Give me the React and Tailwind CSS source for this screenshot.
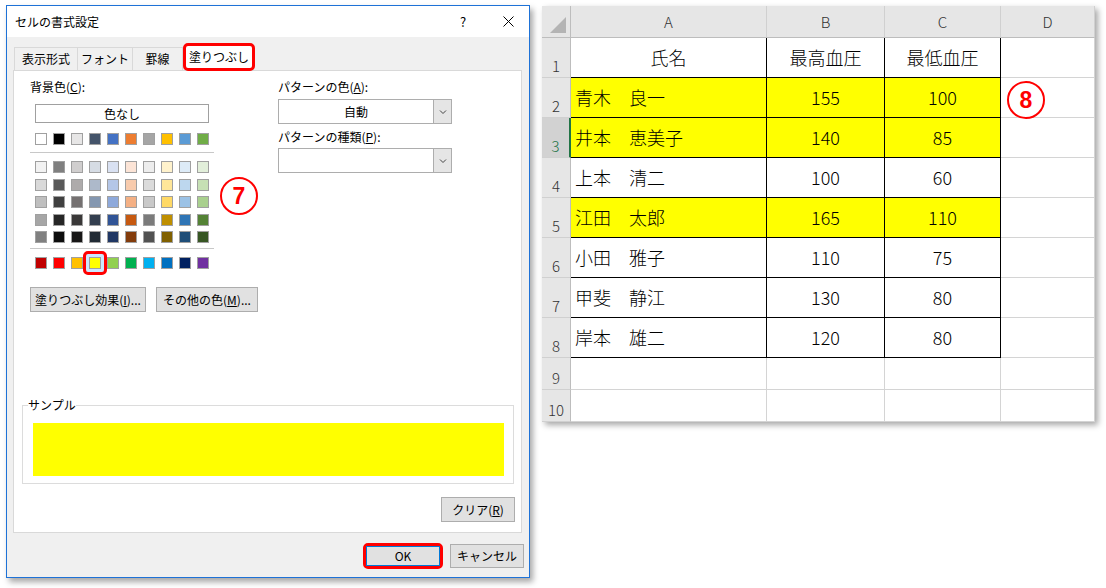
import React from "react";

const font = "font-['Noto_Sans_CJK_JP','Noto_Sans',sans-serif]";

const topRow = ["#ffffff", "#000000", "#e7e6e6", "#44546a", "#4472c4", "#ed7d31", "#a5a5a5", "#ffc000", "#5b9bd5", "#70ad47"];
const tintRows = [
  ["#f2f2f2", "#7f7f7f", "#d0cece", "#d6dce4", "#d9e1f2", "#fce4d6", "#ededed", "#fff2cc", "#ddebf7", "#e2efda"],
  ["#d9d9d9", "#595959", "#aeabab", "#adb9ca", "#b4c6e7", "#f8cbad", "#dbdbdb", "#ffe699", "#bdd7ee", "#c6e0b4"],
  ["#bfbfbf", "#404040", "#757171", "#8497b0", "#8ea9db", "#f4b084", "#c9c9c9", "#ffd966", "#9bc2e6", "#a9d08e"],
  ["#a6a6a6", "#262626", "#3a3838", "#333f4f", "#305496", "#c65911", "#7b7b7b", "#bf8f00", "#2f75b5", "#548235"],
  ["#808080", "#0d0d0d", "#171616", "#222b35", "#203764", "#833c0c", "#525252", "#806000", "#1f4e78", "#375623"],
];
const standard = ["#c00000", "#ff0000", "#ffc000", "#ffff00", "#92d050", "#00b050", "#00b0f0", "#0070c0", "#002060", "#7030a0"];

const rows = [
  ["氏名", "最高血圧", "最低血圧", false],
  ["青木　良一", "155", "100", true],
  ["井本　恵美子", "140", "85", true],
  ["上本　清二", "100", "60", false],
  ["江田　太郎", "165", "110", true],
  ["小田　雅子", "110", "75", false],
  ["甲斐　静江", "130", "80", false],
  ["岸本　雄二", "120", "80", false],
];

function Swatch({ color }) {
  return (
    <div
      className="w-[12px] h-[12px] border border-[#a0a0a0]"
      style={{ backgroundColor: color }}
    />
  );
}

function SwatchRow({ colors, selected }) {
  return (
    <div className="flex gap-[6px]">
      {colors.map((c, i) =>
        i === selected ? (
          <div key={i} className="relative w-[12px] h-[12px]">
            <span className="absolute -inset-[6px] rounded-[5px] border-[3px] border-[#ff0000] bg-[#cce8ff]" />
            <span className="absolute inset-0 border border-[#a0a0a0] bg-[#ffff00]" />
          </div>
        ) : (
          <Swatch key={i} color={c} />
        )
      )}
    </div>
  );
}

function Chevron() {
  return (
    <svg width="10" height="10" viewBox="0 0 10 10">
      <polyline points="2,3.5 5,6.5 8,3.5" fill="none" stroke="#444" strokeWidth="1" />
    </svg>
  );
}

function Dropdown({ value }) {
  return (
    <div className="flex w-[174px] h-[25px] border border-[#adadad] bg-white">
      <div className="flex-1 flex items-center justify-center text-[12px]">{value}</div>
      <div className="w-[18px] border-l border-[#adadad] bg-[#e5e5e5] flex items-center justify-center">
        <Chevron />
      </div>
    </div>
  );
}

function Btn({ className = "", children }) {
  return (
    <div className={`h-[25px] border border-[#adadad] bg-[#e1e1e1] flex items-center justify-center text-[12px] ${className}`}>
      {children}
    </div>
  );
}

function Circle({ n, className }) {
  return (
    <div
      className={`absolute w-[38px] h-[38px] rounded-full border-[2.5px] border-[#ff0000] bg-white flex items-center justify-center text-[23px] font-bold text-[#ff0000] font-['Liberation_Sans',sans-serif] ${className}`}
    >
      {n}
    </div>
  );
}

function Dialog() {
  return (
    <div className="ml-[6px] mt-[5px] w-[524px] h-[573px] border border-[#1e72d7] bg-[#f0f0f0] flex flex-col shadow-[3px_4px_6px_rgba(0,0,0,0.35)]">
      <div className="h-[31px] bg-white flex items-center pl-[8px] text-[12px]">
        <span>セルの書式設定</span>
        <div className="ml-auto mr-[6px] flex items-center">
          <div className="w-[30px] text-center text-[13px]">?</div>
          <div className="ml-[15px] w-[30px] flex justify-center">
            <svg width="11" height="11" viewBox="0 0 11 11">
              <path d="M0.5 0.5 L10.5 10.5 M10.5 0.5 L0.5 10.5" stroke="#000" strokeWidth="1" />
            </svg>
          </div>
        </div>
      </div>

      <div className="relative z-10 h-[34px] pt-[6px] pl-[7px] flex items-end text-[12px]">
        <div className="w-[64px] h-[23px] mb-px border border-b-0 border-[#d9d9d9] bg-[#f0f0f0] flex items-center justify-center">表示形式</div>
        <div className="w-[55px] h-[23px] mb-px border border-l-0 border-b-0 border-[#d9d9d9] bg-[#f0f0f0] flex items-center justify-center">フォント</div>
        <div className="w-[50px] h-[23px] mb-px border border-l-0 border-b-0 border-[#d9d9d9] bg-[#f0f0f0] flex items-center justify-center">罫線</div>
        <div className="w-[72px] h-[28px] rounded-[5px] border-[3px] border-[#ff0000] bg-white flex items-center justify-center">塗りつぶし</div>
      </div>

      <div className="relative -mt-px ml-[6px] mr-[7px] h-[463px] border border-[#d9d9d9] bg-white flex flex-col text-[12px]">
        <div className="flex pl-[16px] pt-[8px]">
          <div className="w-[248px] flex flex-col">
            <div className="h-[16px] leading-[16px]">
              背景色(<span className="underline">C</span>):
            </div>
            <div className="ml-[5px] mt-[9px] w-[174px] h-[19px] border border-[#a0a0a0] flex items-center justify-center">色なし</div>
            <div className="ml-[5px] mt-[10px]">
              <SwatchRow colors={topRow} />
            </div>
            <div className="mt-[7px] w-[184px] h-px bg-[#c8c8c8]" />
            <div className="ml-[5px] mt-[8px] flex flex-col gap-[5.5px]">
              {tintRows.map((r, i) => (
                <SwatchRow key={i} colors={r} />
              ))}
            </div>
            <div className="mt-[5px] w-[184px] h-px bg-[#c8c8c8]" />
            <div className="ml-[5px] mt-[8px]">
              <SwatchRow colors={standard} selected={3} />
            </div>
            <div className="mt-[18px] flex gap-[10px]">
              <Btn className="w-[116px]">
                塗りつぶし効果(<span className="underline">I</span>)...
              </Btn>
              <Btn className="w-[102px]">
                その他の色(<span className="underline">M</span>)...
              </Btn>
            </div>
          </div>

          <div className="w-[174px] flex flex-col">
            <div className="h-[16px] leading-[16px]">
              パターンの色(<span className="underline">A</span>):
            </div>
            <div className="mt-[4px]">
              <Dropdown value="自動" />
            </div>
            <div className="mt-[5px] h-[16px] leading-[16px]">
              パターンの種類(<span className="underline">P</span>):
            </div>
            <div className="mt-[3px]">
              <Dropdown value="" />
            </div>
          </div>
        </div>

        <fieldset className="mt-[85px] ml-[8px] w-[492px] border border-[#dcdcdc] pl-[5px] pb-[7px]">
          <legend className="px-0 h-[16px] leading-[16px]">サンプル</legend>
          <div className="ml-[5px] mt-[10px] w-[471px] h-[53px] bg-[#ffff00]" />
        </fieldset>

        <div className="self-end mr-[6px] mt-[13px]">
          <Btn className="w-[74px]">
            クリア(<span className="underline">R</span>)
          </Btn>
        </div>

        <Circle n="7" className="left-[206px] top-[106px]" />
      </div>

      <div className="mt-[10px] mr-[5px] flex justify-end items-start gap-[7px] text-[12px]">
        <div className="rounded-[5px] border-[3px] border-[#ff0000]">
          <div className="w-[74px] h-[20px] border border-[#0078d7] bg-[#e1e1e1] flex items-center justify-center">OK</div>
        </div>
        <div className="mt-[1px] w-[74px] h-[24px] border border-[#adadad] bg-[#e1e1e1] flex items-center justify-center">キャンセル</div>
      </div>
    </div>
  );
}

function Sheet() {
  const colHead = "bg-[#e6e6e6] border-r border-b border-r-[#d0d0d0] border-b-[#bdbdbd] flex items-center justify-center pt-[2px] text-[15px] font-light text-[#333]";
  const rowHead = "border-r border-b border-b-[#d0d0d0] flex items-end justify-center pb-[2px] text-[15px] leading-[18px] font-light";
  const cell = "border-r border-b flex items-center text-[18px] font-light";
  return (
    <div className="relative ml-[12px] mt-[6px] w-[553px] bg-white grid grid-cols-[29px_196px_118px_116px_94px] grid-rows-[32px_repeat(8,40px)_32px_32px] shadow-[3px_3px_6px_rgba(0,0,0,0.35)]">
      <div className="relative bg-[#e6e6e6] border-r border-b border-[#bdbdbd]">
        <svg className="absolute right-[4px] bottom-[4px]" width="16" height="16" viewBox="0 0 16 16">
          <polygon points="16,0 16,16 0,16" fill="#b4b4b4" />
        </svg>
      </div>
      {["A", "B", "C", "D"].map((c) => (
        <div key={c} className={colHead}>{c}</div>
      ))}

      {rows.map(([name, hi, lo, yellow], i) => {
        const bg = yellow ? "bg-[#ffff00]" : "bg-white";
        const active = i === 2;
        return (
          <React.Fragment key={i}>
            <div
              className={`${rowHead} ${
                active
                  ? "bg-[#d2d2d2] text-[#217346] border-r-2 border-r-[#217346]"
                  : "bg-[#e6e6e6] text-[#333] border-r-[#bdbdbd]"
              }`}
            >
              {i + 1}
            </div>
            <div className={`${cell} border-black ${bg} ${i === 0 ? "justify-center" : "pl-[4px]"}`}>{name}</div>
            <div className={`${cell} border-black ${bg} justify-center`}>{hi}</div>
            <div className={`${cell} border-black ${bg} justify-center`}>{lo}</div>
            <div className={`${cell} border-[#d4d4d4]`} />
          </React.Fragment>
        );
      })}

      {[9, 10].map((n) => (
        <React.Fragment key={n}>
          <div className={`${rowHead} bg-[#e6e6e6] text-[#333] border-r-[#bdbdbd]`}>{n}</div>
          <div className={`${cell} border-[#d4d4d4]`} />
          <div className={`${cell} border-[#d4d4d4]`} />
          <div className={`${cell} border-[#d4d4d4]`} />
          <div className={`${cell} border-[#d4d4d4]`} />
        </React.Fragment>
      ))}

      <Circle n="8" className="left-[465px] top-[75px]" />
    </div>
  );
}

export default function App() {
  return (
    <div className={`w-[1106px] h-[588px] bg-white flex items-start text-black ${font}`}>
      <Dialog />
      <Sheet />
    </div>
  );
}
